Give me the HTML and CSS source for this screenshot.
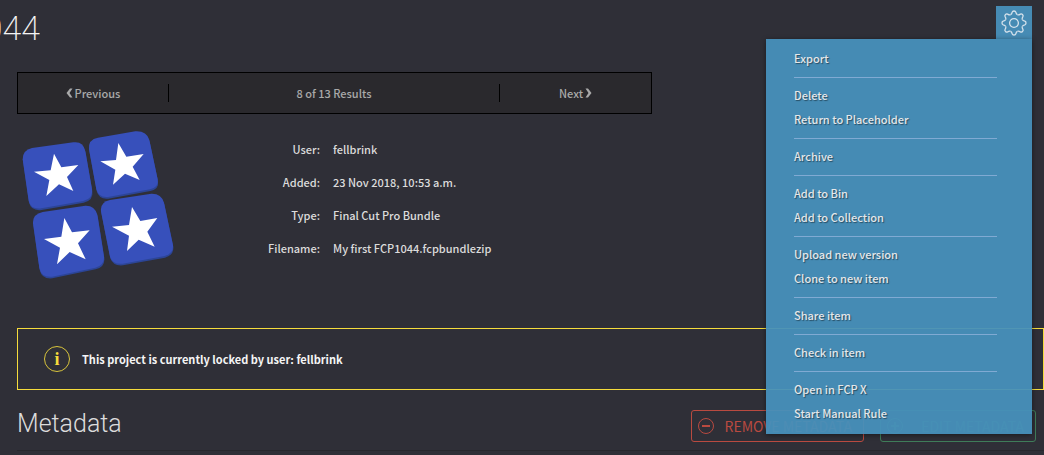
FILE: index.html
```html
<!DOCTYPE html>
<html lang="en">
<head>
<meta charset="utf-8">
<title>Item details</title>
<link rel="stylesheet" href="styles.css">
</head>
<body>
<header class="header">
  <h1 class="title">1044</h1>
  <div class="actions">
    <button class="gear" type="button" aria-label="Item actions" aria-expanded="true">
      <svg class="gear-icon" viewBox="-13 -13 26 26" aria-hidden="true">
        <defs><path id="tooth" d="M-3.4 -8.3C-2.5 -8.7 -2 -9.8 -1.8 -10.8Q-1.5 -12 0 -12Q1.5 -12 1.8 -10.8C2 -9.8 2.5 -8.7 3.4 -8.3"/></defs>
        <use href="#tooth"/><use href="#tooth" transform="rotate(45)"/><use href="#tooth" transform="rotate(90)"/><use href="#tooth" transform="rotate(135)"/>
        <use href="#tooth" transform="rotate(180)"/><use href="#tooth" transform="rotate(225)"/><use href="#tooth" transform="rotate(270)"/><use href="#tooth" transform="rotate(315)"/>
        <circle r="4.4"/>
      </svg>
    </button>
    <nav class="menu" aria-label="Item actions">
      <ul class="group"><li><a href="#">Export</a></li></ul>
      <ul class="group"><li><a href="#">Delete</a></li><li><a href="#">Return to Placeholder</a></li></ul>
      <ul class="group"><li><a href="#">Archive</a></li></ul>
      <ul class="group"><li><a href="#">Add to Bin</a></li><li><a href="#">Add to Collection</a></li></ul>
      <ul class="group"><li><a href="#">Upload new version</a></li><li><a href="#">Clone to new item</a></li></ul>
      <ul class="group"><li><a href="#">Share item</a></li></ul>
      <ul class="group"><li><a href="#">Check in item</a></li></ul>
      <ul class="group"><li><a href="#">Open in FCP X</a></li><li><a href="#">Start Manual Rule</a></li></ul>
    </nav>
  </div>
</header>
<main class="main">
  <nav class="pager" aria-label="Results">
    <a class="pager-cell" href="#"><svg class="chevron" viewBox="0 0 7 10" aria-hidden="true"><path d="M6.500 0.500H4L0.500 5L4 9.500H6.500L3.500 5Z"/></svg>Previous</a>
    <span class="pager-cell pager-count">8 of 13 Results</span>
    <a class="pager-cell" href="#">Next<svg class="chevron" viewBox="0 0 7 10" aria-hidden="true"><path d="M0.500 0.500H3L6.500 5L3 9.500H0.500L3.500 5Z"/></svg></a>
  </nav>
  <section class="summary">
    <svg class="thumb" viewBox="21 0 519 510" role="img" aria-label="Bundle">
      <g fill="#2c4597" transform="translate(1 5)">
        <path d="M38 118Q38 90 66 84L190 67Q220 63 226 94L246 208Q250 236 220 243L94 265Q62 269 56 242Z"/>
        <path d="M237 88Q234 58 264 53L376 34Q410 32 418 60L443 178Q447 202 420 208L294 231Q266 234 259 208Z"/>
        <path d="M69 310Q68 282 98 276L226 257Q254 256 262 284L282 410Q284 436 256 443L126 470Q94 473 88 444Z"/>
        <path d="M273 274Q270 246 300 240L424 221Q454 220 462 248L489 376Q491 400 464 408L338 431Q308 434 300 410Z"/>
      </g>
      <g fill="#3750bb">
        <path d="M38 118Q38 90 66 84L190 67Q220 63 226 94L246 208Q250 236 220 243L94 265Q62 269 56 242Z"/>
        <path d="M237 88Q234 58 264 53L376 34Q410 32 418 60L443 178Q447 202 420 208L294 231Q266 234 259 208Z"/>
        <path d="M69 310Q68 282 98 276L226 257Q254 256 262 284L282 410Q284 436 256 443L126 470Q94 473 88 444Z"/>
        <path d="M273 274Q270 246 300 240L424 221Q454 220 462 248L489 376Q491 400 464 408L338 431Q308 434 300 410Z"/>
      </g>
      <g fill="#fff">
        <path d="M132 101L154 142L205 135L171 171L190 213L147 193L109 228L118 180L72 155L122 151Z"/>
        <path d="M325 69L349 110L401 102L368 140L389 180L345 161L309 194L316 149L271 124L318 120Z"/>
        <path d="M163 294L186 337L239 331L204 370L227 418L179 396L141 433L150 383L102 357L154 350Z"/>
        <path d="M366 261L391 303L442 294L412 335L434 380L386 359L351 393L357 347L306 320L357 315Z"/>
      </g>
    </svg>
    <dl class="facts">
      <dt>User:</dt><dd>fellbrink</dd>
      <dt>Added:</dt><dd>23 Nov 2018, 10:53 a.m.</dd>
      <dt>Type:</dt><dd>Final Cut Pro Bundle</dd>
      <dt>Filename:</dt><dd>My first FCP1044.fcpbundlezip</dd>
    </dl>
  </section>
  <div class="alert" role="status">
    <span class="info">i</span>
    <strong class="alert-text">This project is currently locked by user: fellbrink</strong>
  </div>
  <section class="metadata">
    <h2 class="section-title">Metadata</h2>
    <div class="tools">
      <button class="tool remove" type="button">
        <svg class="tool-icon" viewBox="0 0 16 16" aria-hidden="true"><circle cx="8" cy="8" r="7.500"/><path d="M4 8H12" stroke-width="2"/></svg>
        <span class="tool-label">REMOVE METADATA</span>
      </button>
      <button class="tool edit" type="button">
        <svg class="tool-icon" viewBox="0 0 16 16" aria-hidden="true"><circle cx="8" cy="8" r="7.500"/><path d="M4 8H12M8 4V12" stroke-width="2"/></svg>
        <span class="tool-label">EDIT METADATA</span>
      </button>
    </div>
  </section>
</main>
</body>
</html>
```
FILE: styles.css
```css
* { box-sizing: border-box; }
body {
  margin: 0;
  background: #2f2f37;
  color: #dcdcdc;
  font-family: "Noto Sans CJK SC", "Open Sans", sans-serif;
  font-size: 11px;
  font-weight: 500;
  line-height: 24px;
  overflow: hidden;
}
a { color: inherit; text-decoration: none; }
ul, dl, dd, h1, h2 { margin: 0; padding: 0; list-style: none; }
button { font: inherit; cursor: pointer; }

.header { position: relative; display: flex; justify-content: space-between; padding: 6px 12px 0 0; height: 72px; }
.title {
  display: flex;
  justify-content: flex-end;
  width: 40px;
  overflow: hidden;
  color: #f4f4f4;
  font-family: Roboto, sans-serif;
  font-size: 34px;
  font-weight: 200;
  line-height: 44px;
}
.gear { display: flex; justify-content: center; align-items: center; width: 36px; height: 33px; padding: 0; border: 0; background: #468bb4; }
.gear-icon { width: 26px; height: 26px; fill: none; stroke: #d5e2ec; stroke-width: 1.3; }
.menu {
  position: absolute;
  z-index: 2;
  top: 39px;
  right: 12px;
  width: 266px;
  padding: 8px 35px 8px 28px;
  background: rgba(71, 144, 187, 0.95);
  box-shadow: 0 1px 5px rgba(0, 0, 0, 0.45);
  color: #e4e7ea;
  text-shadow: 1px 1px 1px rgba(0, 0, 0, 0.45);
}
.group + .group { margin-top: 6px; padding-top: 6px; border-top: 1px solid #80aad3; }
.group a { display: block; padding-bottom: 2px; line-height: 22px; }

.main { padding-left: 17px; }
.pager {
  display: grid;
  grid-template-columns: 150fr 332fr 151fr;
  align-items: center;
  max-width: 635px;
  height: 42px;
  border: 1px solid #000;
  background: #2a292d;
  color: #a9a9a9;
}
.pager-cell { display: flex; justify-content: center; align-items: center; gap: 2px; height: 18px; }
.pager-count { border: solid #000; border-width: 0 1px; }
.chevron { width: 7px; height: 10px; fill: currentColor; }

.summary { display: flex; gap: 56px; height: 214px; padding-top: 6px; }
.thumb { flex: none; width: 173px; height: 170px; }
.facts { display: grid; grid-template-columns: 74px auto; grid-auto-rows: 33px; column-gap: 13px; align-items: center; align-content: start; padding-top: 12px; }
.facts dt { text-align: right; }

.alert { display: flex; align-items: center; gap: 12px; height: 62px; padding: 0 26px; border: 1px solid #f5dc3c; }
.info {
  display: flex;
  justify-content: center;
  align-items: center;
  width: 26px;
  height: 26px;
  border: 1px solid #d8c43c;
  border-radius: 50%;
  color: #f5dc3c;
  font-family: "Liberation Serif", serif;
  font-size: 18px;
  font-weight: 700;
}
.alert-text { color: #f5f5f5; font-weight: 700; }

.metadata { display: flex; justify-content: space-between; align-items: center; height: 61px; padding: 8px 8px 0 0; border-bottom: 1px solid #27272d; }
.section-title { font-family: Roboto, sans-serif; font-size: 25px; font-weight: 300; line-height: 32px; }
.tools { display: flex; gap: 16px; margin-top: 4px; }
.tool { display: flex; align-items: center; height: 32px; padding: 0 11px 0 6px; border: 1px solid; border-radius: 3px; background: none; font-size: 14px; font-weight: 400; }
.remove { width: 173px; color: #b94a40; }
.edit { width: 156px; color: #3f7c59; }
.tool-icon { width: 16px; height: 16px; fill: none; stroke: currentColor; }
.tool-label { flex: 1; text-align: right; white-space: nowrap; }
```
